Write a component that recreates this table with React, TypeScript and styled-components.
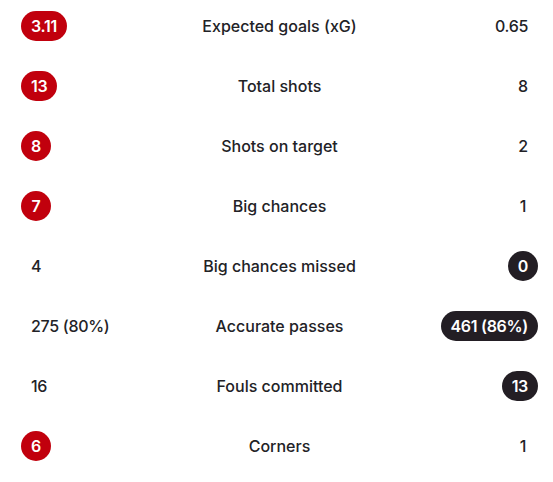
import styled, { createGlobalStyle } from "styled-components";

interface Stat {
  label: string;
  home: string;
  away: string;
  winner: "home" | "away";
}

interface ValueProps {
  $side: "home" | "away";
  $highlight: boolean;
}

const stats: Stat[] = [
  { label: "Expected goals (xG)", home: "3.11", away: "0.65", winner: "home" },
  { label: "Total shots", home: "13", away: "8", winner: "home" },
  { label: "Shots on target", home: "8", away: "2", winner: "home" },
  { label: "Big chances", home: "7", away: "1", winner: "home" },
  { label: "Big chances missed", home: "4", away: "0", winner: "away" },
  { label: "Accurate passes", home: "275 (80%)", away: "461 (86%)", winner: "away" },
  { label: "Fouls committed", home: "16", away: "13", winner: "away" },
  { label: "Corners", home: "6", away: "1", winner: "home" },
];

const GlobalStyle = createGlobalStyle`
  body {
    margin: 0;
    background: #ffffff;
    font-family: Inter, "Noto Sans", sans-serif;
    color: #222226;
  }
`;

const App = () => {
  return (
    <>
      <GlobalStyle />
      <List>
        {stats.map((s) => (
          <Row key={s.label}>
            <Cell $align="flex-start">
              <Value $side="home" $highlight={s.winner === "home"}>
                {s.home}
              </Value>
            </Cell>
            <Label>{s.label}</Label>
            <Cell $align="flex-end">
              <Value $side="away" $highlight={s.winner === "away"}>
                {s.away}
              </Value>
            </Cell>
          </Row>
        ))}
      </List>
    </>
  );
};

const List = styled.div`
  display: flex;
  flex-direction: column;
  gap: 8px;
  padding: 0 15px 0 21px;
`;

const Row = styled.div`
  display: grid;
  grid-template-columns: 1fr auto 1fr;
  align-items: center;
  height: 52px;
`;

const Cell = styled.div<{ $align: string }>`
  display: flex;
  justify-content: ${({ $align }) => $align};
`;

const Label = styled.div`
  font-size: 16px;
  font-weight: 500;
  text-align: center;
  color: #222226;
`;

const Value = styled.span<ValueProps>`
  display: inline-flex;
  align-items: center;
  justify-content: center;
  box-sizing: border-box;
  min-width: 30px;
  height: 30px;
  padding: 0 10px;
  border-radius: 15px;
  font-size: 16px;
  letter-spacing: -0.3px;
  color: ${({ $highlight }) => ($highlight ? "#ffffff" : "#222226")};
  background: ${({ $highlight, $side }) =>
    !$highlight ? "transparent" : $side === "home" ? "#c1000d" : "#231e24"};
  font-weight: ${({ $highlight }) => ($highlight ? 600 : 500)};
`;

export default App;
